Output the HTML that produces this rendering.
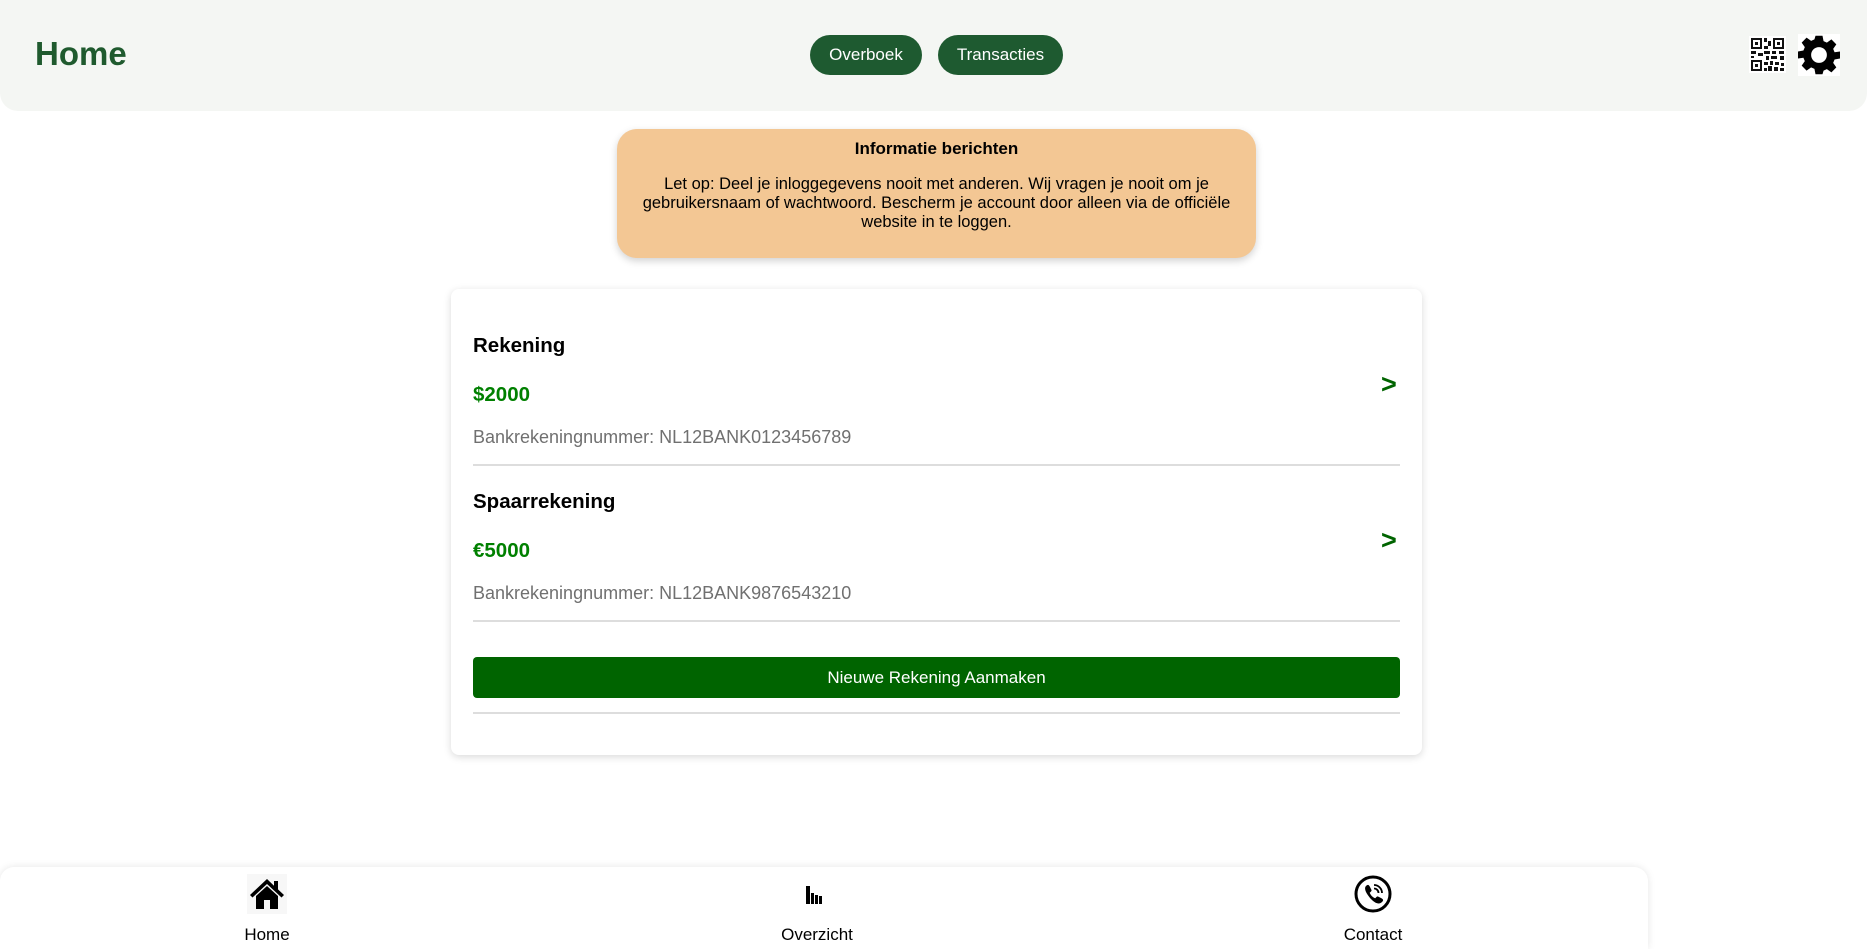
<!DOCTYPE html>
<html><head><meta charset="utf-8"><style>
*{box-sizing:border-box;margin:0;padding:0}
html,body{width:1867px;height:949px;overflow:hidden}
body{background:#fff;font-family:"Liberation Sans",Arial,sans-serif;position:relative}
.hdr{position:absolute;left:0;top:0;width:1867px;height:111px;background:#f4f6f3;border-radius:0 0 18px 18px}
.hdr h1{position:absolute;left:35px;top:35px;font-size:33px;font-weight:bold;color:#1f5a2e}
.btn{position:absolute;top:35px;height:40px;border-radius:20px;background:#1e5a30;color:#fff;font-size:17px;line-height:40px;text-align:center}
.info{position:absolute;left:617px;top:129px;width:639px;height:129px;background:#f3c794;border-radius:20px;box-shadow:0 3px 8px rgba(0,0,0,.18);text-align:center;color:#000;font-size:16.5px;line-height:19px;padding:10px 20px}
.info b{display:block;font-size:17px;margin-bottom:17px}
.card{position:absolute;left:451px;top:289px;width:971px;height:466px;background:#fff;border-radius:8px;box-shadow:0 2px 8px rgba(0,0,0,.15)}
.t{position:absolute;left:22px;font-size:20.5px;font-weight:bold;color:#000}
.amt{position:absolute;left:22px;font-size:20.5px;font-weight:bold;color:#008000}
.nr{position:absolute;left:22px;font-size:18px;color:#707070}
.hr{position:absolute;left:22px;width:927px;height:2px;background:#ddd}
.arr{position:absolute;left:930px;font-size:27px;font-weight:bold;color:#006400}
.nb{position:absolute;left:22px;top:368px;width:927px;height:41px;background:#006400;border-radius:4px;color:#fff;font-size:17px;line-height:41px;text-align:center}
.nav{position:absolute;left:0;top:867px;width:1648px;height:82px;background:#fff;border-radius:14px 14px 0 0;box-shadow:0 0 8px rgba(0,0,0,.1)}
.it{position:absolute;top:0;width:200px;text-align:center;font-size:17px;color:#000}
.it svg{position:absolute;left:80px;top:7px}
.it span{position:absolute;left:0;width:200px;top:58px}
</style></head><body>
<div class="hdr">
<h1>Home</h1>
<div class="btn" style="left:810px;width:112px">Overboek</div>
<div class="btn" style="left:938px;width:125px">Transacties</div>
<svg style="position:absolute;left:1749px;top:36px" width="37" height="37" viewBox="0 0 37 37">
<rect width="37" height="37" fill="#fff"/>
<g fill="#111">
<rect x="2" y="2" width="11" height="11"/><rect x="24" y="2" width="11" height="11"/><rect x="2" y="24" width="11" height="11"/>
</g><g fill="#fff"><rect x="4" y="4" width="7" height="7"/><rect x="26" y="4" width="7" height="7"/><rect x="4" y="26" width="7" height="7"/></g>
<g fill="#111"><rect x="6" y="6" width="3" height="3"/><rect x="28" y="6" width="3" height="3"/><rect x="6" y="28" width="3" height="3"/>
<rect x="15" y="2" width="3" height="4"/><rect x="19" y="5" width="3" height="5"/><rect x="15" y="10" width="4" height="3"/>
<rect x="2" y="15" width="5" height="3"/><rect x="9" y="17" width="5" height="3"/><rect x="15" y="15" width="6" height="3"/><rect x="23" y="15" width="4" height="3"/><rect x="30" y="15" width="5" height="3"/>
<rect x="2" y="20" width="3" height="2"/><rect x="17" y="20" width="3" height="4"/><rect x="22" y="20" width="6" height="3"/><rect x="31" y="20" width="4" height="4"/>
<rect x="15" y="26" width="4" height="3"/><rect x="21" y="25" width="3" height="4"/><rect x="26" y="26" width="4" height="3"/><rect x="32" y="27" width="3" height="3"/>
<rect x="15" y="32" width="3" height="3"/><rect x="19" y="30" width="4" height="5"/><rect x="25" y="31" width="4" height="4"/><rect x="31" y="32" width="4" height="3"/></g>
</svg>
<svg style="position:absolute;left:1798px;top:34px" width="42" height="42" viewBox="0 0 24 24"><rect width="24" height="24" fill="#fff"/>
<path fill="#000" fill-rule="evenodd" d="M10 1h4l.6 3.1 1.9.8 2.6-1.8 2.8 2.8-1.8 2.6.8 1.9L24 10v4l-3.1.6-.8 1.9 1.8 2.6-2.8 2.8-2.6-1.8-1.9.8L14 23h-4l-.6-3.1-1.9-.8-2.6 1.8-2.8-2.8 1.8-2.6-.8-1.9L0 14v-4l3.1-.6.8-1.9L2.1 4.9l2.8-2.8 2.6 1.8 1.9-.8zM12 7.5a4.5 4.5 0 1 0 0 9 4.5 4.5 0 0 0 0-9z"/></svg>
</div>
<div class="info"><b>Informatie berichten</b>Let op: Deel je inloggegevens nooit met anderen. Wij vragen je nooit om je gebruikersnaam of wachtwoord. Bescherm je account door alleen via de officiële website in te loggen.</div>
<div class="card">
<div class="t" style="top:45px">Rekening</div>
<div class="amt" style="top:94px">$2000</div>
<div class="nr" style="top:138px">Bankrekeningnummer: NL12BANK0123456789</div>
<div class="arr" style="top:80px">&gt;</div>
<div class="hr" style="top:175px"></div>
<div class="t" style="top:201px">Spaarrekening</div>
<div class="amt" style="top:250px">€5000</div>
<div class="nr" style="top:294px">Bankrekeningnummer: NL12BANK9876543210</div>
<div class="arr" style="top:236px">&gt;</div>
<div class="hr" style="top:331px"></div>
<div class="nb">Nieuwe Rekening Aanmaken</div>
<div class="hr" style="top:423px"></div>
</div>
<div class="nav">
<div class="it" style="left:167px"><svg width="40" height="40" viewBox="0 0 40 40"><rect width="40" height="40" fill="#f7f7f7"/><path d="M20 5 3 21l2.5 2.5L20 10l14.5 13.5L37 21l-6-5.6V7h-4v4.7z" fill="#000"/><path d="M9 22 20 12l11 10v13h-8v-9h-6v9H9z" fill="#000"/></svg><span>Home</span></div>
<div class="it" style="left:717px"><svg width="40" height="40" viewBox="0 0 40 40"><g fill="#000"><rect x="9" y="12" width="4" height="18"/><rect x="14" y="19" width="3" height="11"/><rect x="18" y="21" width="3" height="9"/><rect x="22" y="22" width="3" height="8"/></g></svg><span>Overzicht</span></div>
<div class="it" style="left:1273px"><svg width="40" height="40" viewBox="0 0 40 40"><circle cx="20" cy="20" r="17" fill="none" stroke="#000" stroke-width="3"/><path d="M13 12c2-2 3-1 4 1l1.5 3c.5 1-1 2-1.8 2.8 1 2.5 3 4.5 5.5 5.5.8-.8 1.8-2.3 2.8-1.8l3 1.5c2 1 3 2 1 4-3 3-7 1-10.5-2.5S10 15 13 12z" fill="#000"/><path d="M21 11a8 8 0 0 1 8 8M21 14.5a4.5 4.5 0 0 1 4.5 4.5" fill="none" stroke="#000" stroke-width="1.8"/></svg><span>Contact</span></div>
</div>
</body></html>
